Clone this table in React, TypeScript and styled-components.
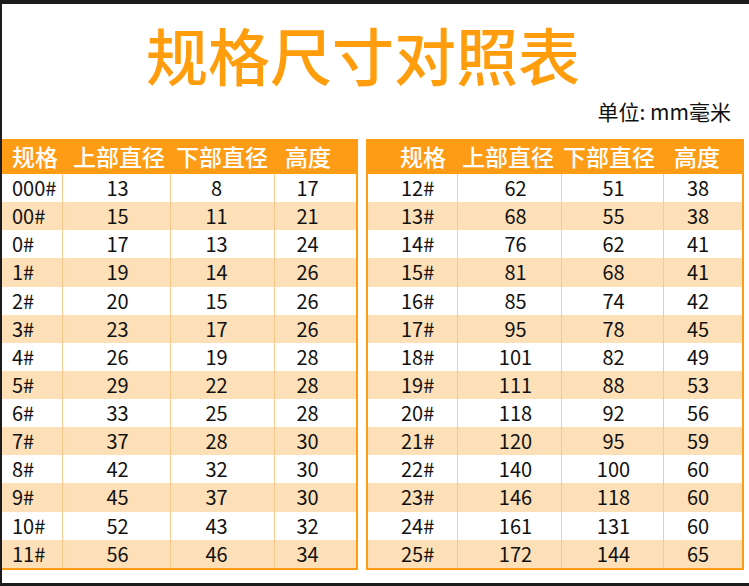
import styled, { createGlobalStyle } from 'styled-components';

const GlobalStyle = createGlobalStyle`
  html, body {
    margin: 0;
    padding: 0;
    background: #ffffff;
  }
  body {
    font-family: "Noto Sans CJK SC", "Noto Sans", sans-serif;
  }
`;

const ORANGE = '#ff9c16';
const STRIPE = '#fddfb8';
const DIVIDER = '#f9c88c';

type Row = [string, number, number, number];

const leftRows: Row[] = [
  ['000#', 13, 8, 17],
  ['00#', 15, 11, 21],
  ['0#', 17, 13, 24],
  ['1#', 19, 14, 26],
  ['2#', 20, 15, 26],
  ['3#', 23, 17, 26],
  ['4#', 26, 19, 28],
  ['5#', 29, 22, 28],
  ['6#', 33, 25, 28],
  ['7#', 37, 28, 30],
  ['8#', 42, 32, 30],
  ['9#', 45, 37, 30],
  ['10#', 52, 43, 32],
  ['11#', 56, 46, 34],
];

const rightRows: Row[] = [
  ['12#', 62, 51, 38],
  ['13#', 68, 55, 38],
  ['14#', 76, 62, 41],
  ['15#', 81, 68, 41],
  ['16#', 85, 74, 42],
  ['17#', 95, 78, 45],
  ['18#', 101, 82, 49],
  ['19#', 111, 88, 53],
  ['20#', 118, 92, 56],
  ['21#', 120, 95, 59],
  ['22#', 140, 100, 60],
  ['23#', 146, 118, 60],
  ['24#', 161, 131, 60],
  ['25#', 172, 144, 65],
];

const headings = ['规格', '上部直径', '下部直径', '高度'];

interface TableSpec {
  cols: number[];
  headIndent: number[];
  shift: number[];
  leftBorder: boolean;
}

const leftSpec: TableSpec = {
  cols: [60, 108, 104, 82],
  headIndent: [10, 11, 6, 11],
  shift: [10, 1, -6, -8],
  leftBorder: false,
};

const rightSpec: TableSpec = {
  cols: [89, 104, 102, 79],
  headIndent: [32, 5, 2, 11],
  shift: [33, 6, 1, -5],
  leftBorder: true,
};

const Frame = styled.div`
  width: 749px;
  height: 586px;
  box-sizing: border-box;
  border-top: 4px solid #1c1c1c;
  border-left: 2px solid #1c1c1c;
  border-bottom: 3px solid #1c1c1c;
  display: flex;
  flex-direction: column;
  overflow: hidden;
`;

const Title = styled.h1`
  margin: 19px 0 0;
  padding-left: 144px;
  font-size: 62px;
  line-height: 62px;
  font-weight: 500;
  color: #ff9d0d;
  letter-spacing: 0;
`;

const Unit = styled.div`
  margin-top: 15px;
  padding-right: 18px;
  text-align: right;
  font-size: 21px;
  line-height: 22px;
  color: #111111;
`;

const Tables = styled.div`
  margin-top: 17px;
  display: flex;
  gap: 8px;
  align-items: flex-start;
`;

const Table = styled.div<{ $cols: number[]; $leftBorder: boolean }>`
  display: grid;
  grid-template-columns: ${(p) => p.$cols.map((c) => `${c}px`).join(' ')};
  grid-template-rows: 35px;
  grid-auto-rows: 28.14px;
  border-right: 2px solid ${ORANGE};
  border-bottom: 2px solid ${ORANGE};
  border-left: ${(p) => (p.$leftBorder ? `2px solid ${ORANGE}` : 'none')};
`;

const HeadCell = styled.div<{ $indent: number }>`
  background: ${ORANGE};
  color: #ffffff;
  font-size: 23px;
  font-weight: 500;
  line-height: 35px;
  padding-left: ${(p) => p.$indent}px;
  white-space: nowrap;
  overflow: hidden;
`;

const Cell = styled.div<{ $striped: boolean; $first: boolean; $shift: number }>`
  background: ${(p) => (p.$striped ? STRIPE : '#ffffff')};
  border-left: ${(p) => (p.$first ? 'none' : `1px solid ${DIVIDER}`)};
  color: #111111;
  font-size: 20px;
  line-height: 28px;
  text-align: ${(p) => (p.$first ? 'left' : 'center')};
  padding-left: ${(p) => (p.$first ? p.$shift : Math.max(0, p.$shift * 2))}px;
  padding-right: ${(p) => (p.$first ? 0 : Math.max(0, -p.$shift * 2))}px;
  white-space: nowrap;
`;

function SizeTable({ rows, spec }: { rows: Row[]; spec: TableSpec }) {
  return (
    <Table $cols={spec.cols} $leftBorder={spec.leftBorder}>
      {headings.map((h, i) => (
        <HeadCell key={h} $indent={spec.headIndent[i]}>
          {h}
        </HeadCell>
      ))}
      {rows.map((row, r) =>
        row.map((value, c) => (
          <Cell key={`${r}-${c}`} $striped={r % 2 === 1} $first={c === 0} $shift={spec.shift[c]}>
            {value}
          </Cell>
        ))
      )}
    </Table>
  );
}

export default function App() {
  return (
    <>
      <GlobalStyle />
      <Frame>
        <Title>规格尺寸对照表</Title>
        <Unit>单位: mm毫米</Unit>
        <Tables>
          <SizeTable rows={leftRows} spec={leftSpec} />
          <SizeTable rows={rightRows} spec={rightSpec} />
        </Tables>
      </Frame>
    </>
  );
}
